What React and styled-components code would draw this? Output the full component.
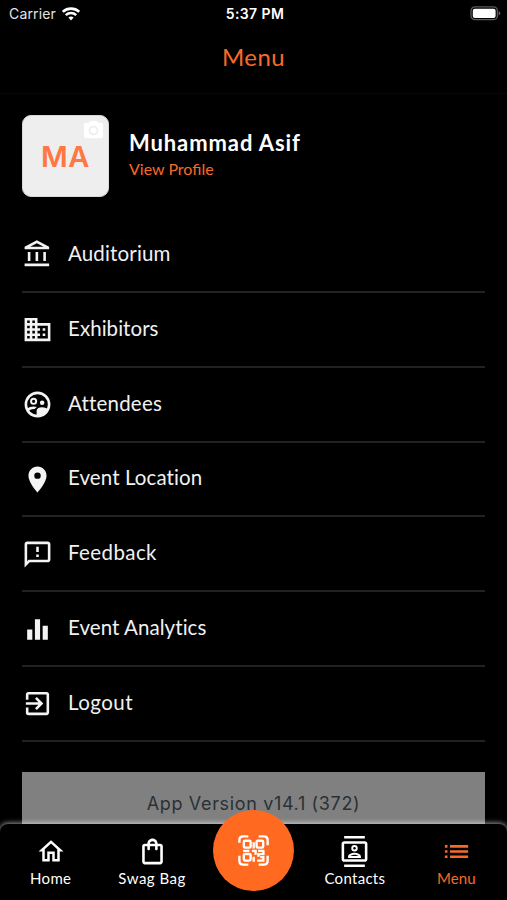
import React from "react";
import styled, { createGlobalStyle } from "styled-components";
import {
    MdOutlineAccountBalance,
    MdOutlineBusiness,
    MdPlace,
    MdOutlineFeedback,
    MdEqualizer,
    MdExitToApp,
    MdOutlineHome,
    MdOutlineShoppingBag,
    MdOutlineContacts,
    MdList,
    MdPhotoCamera,
} from "react-icons/md";

const menus = [
    { label: "Auditorium", icon: MdOutlineAccountBalance, spacing: 0.15 },
    { label: "Exhibitors", icon: MdOutlineBusiness, spacing: 0.05 },
    { label: "Attendees", icon: AttendeesIcon, spacing: 0.2 },
    { label: "Event Location", icon: MdPlace, spacing: 0.1 },
    { label: "Feedback", icon: MdOutlineFeedback, spacing: 0.4 },
    { label: "Event Analytics", icon: MdEqualizer, spacing: 0.06 },
    { label: "Logout", icon: MdExitToApp, spacing: 0.45 },
];

function AttendeesIcon() {
    return (
        <svg viewBox="0 0 24 24" fill="currentColor">
            <circle cx="12" cy="12" r="9" fill="none" stroke="currentColor" strokeWidth="2" />
            <circle cx="9" cy="9.5" r="2" fill="none" stroke="currentColor" strokeWidth="1.5" />
            <circle cx="15.6" cy="10.6" r="1.75" />
            <path d="M3.6 15.2Q6 13.6 9 13.6Q10.5 13.6 11.6 14Q10.3 14.7 9.8 15.5Q7.2 15.3 4.8 17Z" />
            <path d="M11.3 21V17.3Q11.3 14.2 15.6 14.2Q18.4 14.2 20 15.5Q18.2 20.8 11.3 21Z" />
        </svg>
    );
}

function WifiIcon() {
    return (
        <svg width="18" height="14" viewBox="0 0 18 14" fill="none" stroke="#fff">
            <path d="M.8 4.8C5.3.6 12.7.6 17.2 4.8" strokeWidth="2.6" />
            <path d="M3.8 8.1C6.6 5.3 11.4 5.3 14.2 8.1" strokeWidth="2.4" />
            <path d="M6.4 10.6Q9 8.3 11.6 10.6L9 13.4Z" fill="#fff" stroke="none" />
        </svg>
    );
}

function BatteryIcon() {
    return (
        <svg width="31" height="15" viewBox="0 0 31 15">
            <rect x="1" y="0.9" width="26.4" height="12.8" rx="4" fill="none" stroke="#5c5c5e" strokeWidth="1.3" />
            <rect x="2.8" y="2.7" width="22.8" height="9.2" rx="2" fill="#fff" />
            <path d="M28.7 5.2q1.6.6 1.6 2.1t-1.6 2.1Z" fill="#6a6a6c" />
        </svg>
    );
}

function QrIcon() {
    return (
        <svg width="33" height="33" viewBox="0 0 32 32" fill="none" stroke="#fff" strokeWidth="2.3">
            <path d="M2.3 8.5V6Q2.3 2.3 6 2.3H11M21 2.3H26Q29.7 2.3 29.7 6V11M29.7 21V26Q29.7 29.7 26 29.7H21M11 29.7H6Q2.3 29.7 2.3 26V21" />
            <rect x="6.6" y="6.6" width="6.6" height="6.6" rx="1.2" />
            <rect x="19" y="6.6" width="6.4" height="6.6" rx="1.2" />
            <rect x="6.6" y="19.4" width="6.6" height="6.4" rx="1.2" />
            <path d="M16.2 8V14M6 16.4H12M14.5 16.4H18V20M16.2 22V27M20.5 16.4H26.5M25.6 16V19.5H20.8V22M19.5 25.8H25.5V22.4H22.5" />
        </svg>
    );
}

function App() {
    return (
        <>
            <GlobalStyle />
            <Screen>
                <StatusBar>
                    <Carrier>
                        Carrier
                        <WifiIcon />
                    </Carrier>
                    <Time>5:37 PM</Time>
                    <Battery>
                        <BatteryIcon />
                    </Battery>
                </StatusBar>
                <Header>Menu</Header>
                <Content>
                    <Profile>
                        <Avatar>
                            MA
                            <Camera>
                                <MdPhotoCamera />
                            </Camera>
                        </Avatar>
                        <ProfileText>
                            <Name>Muhammad Asif</Name>
                            <ViewProfile>View Profile</ViewProfile>
                        </ProfileText>
                    </Profile>
                    <MenuList>
                        {menus.map(({ label, icon: Icon, spacing }) => (
                            <MenuItem key={label}>
                                <Icon />
                                <MenuLabel $spacing={spacing}>{label}</MenuLabel>
                            </MenuItem>
                        ))}
                    </MenuList>
                    <Version>App Version v14.1 (372)</Version>
                </Content>
                <TabBar>
                    <Tab>
                        <MdOutlineHome />
                        <TabLabel $spacing={0.3}>Home</TabLabel>
                    </Tab>
                    <Tab $size={31}>
                        <MdOutlineShoppingBag />
                        <TabLabel $spacing={0.5}>Swag Bag</TabLabel>
                    </Tab>
                    <ScanSlot>
                        <ScanBtn>
                            <QrIcon />
                        </ScanBtn>
                    </ScanSlot>
                    <Tab $size={31}>
                        <MdOutlineContacts />
                        <TabLabel $spacing={0.3}>Contacts</TabLabel>
                    </Tab>
                    <Tab $active $size={31}>
                        <MdList />
                        <TabLabel $spacing={0.1}>Menu</TabLabel>
                    </Tab>
                </TabBar>
            </Screen>
        </>
    );
}

const GlobalStyle = createGlobalStyle`
    * {
        box-sizing: border-box;
    }

    body {
        margin: 0;
        background: #000;
    }

    button {
        padding: 0;
        border: 0;
        background: none;
        font-family: inherit;
    }
`;

const Screen = styled.div`
    display: flex;
    flex-direction: column;
    width: 507px;
    height: 900px;
    overflow: hidden;
    background: #000;
    color: #fff;
    font-family: Lato, sans-serif;
`;

const StatusBar = styled.div`
    display: grid;
    flex-shrink: 0;
    grid-template-columns: 1fr auto 1fr;
    align-items: center;
    height: 27px;
    padding: 0 6px 0 9px;
    font-family: Inter, sans-serif;
    font-size: 14px;
`;

const Carrier = styled.div`
    display: flex;
    align-items: center;
    gap: 6px;
    color: #e4e4e4;
    letter-spacing: 0.15px;
`;

const Time = styled.div`
    font-weight: 600;
    font-size: 14px;
    letter-spacing: 0.4px;
`;

const Battery = styled.div`
    display: flex;
    justify-content: flex-end;
`;

const Header = styled.header`
    flex-shrink: 0;
    height: 67px;
    border-bottom: 1px solid #070707;
    color: #f86a27;
    font-size: 24px;
    line-height: 60px;
    letter-spacing: 0.4px;
    text-align: center;
`;

const Content = styled.main`
    display: flex;
    flex: 1;
    flex-direction: column;
    min-height: 0;
    padding: 21px 22px 0;
    overflow: hidden;
`;

const Profile = styled.section`
    display: flex;
    flex-shrink: 0;
    align-items: center;
    gap: 20px;
    height: 82px;
`;

const Avatar = styled.div`
    position: relative;
    display: flex;
    align-items: center;
    justify-content: center;
    width: 87px;
    height: 82px;
    border: 1px solid #d8d8d8;
    border-radius: 9px;
    background: #eeeeef;
    color: #ff7743;
    font-family: Inter, sans-serif;
    font-size: 29px;
    font-weight: 600;
    letter-spacing: 0.5px;
`;

const Camera = styled.span`
    position: absolute;
    top: 3px;
    right: 3px;
    display: flex;
    color: #fff;
    font-size: 23px;
`;

const ProfileText = styled.div`
    display: flex;
    flex-direction: column;
    align-items: flex-start;
    padding-bottom: 2px;
`;

const Name = styled.strong`
    font-size: 22px;
    font-weight: 700;
    line-height: 28px;
    letter-spacing: 0.9px;
`;

const ViewProfile = styled.button`
    color: #f86a27;
    font-size: 16px;
    line-height: 24px;
`;

const MenuList = styled.ul`
    flex-shrink: 0;
    margin: 21px 0 0;
    padding: 0;
    list-style: none;
`;

const MenuItem = styled.li`
    display: flex;
    align-items: center;
    gap: 15px;
    height: 74.85px;
    padding-top: 1px;
    border-bottom: 2px solid #222;

    svg {
        width: 31px;
        height: 31px;
        color: #f4f4f4;
    }
`;

const MenuLabel = styled.span`
    padding-bottom: 4px;
    color: #f1f1f1;
    font-size: 20.5px;
    line-height: 26px;
    letter-spacing: ${(props) => props.$spacing}px;
`;

const Version = styled.div`
    flex-shrink: 0;
    height: 62px;
    margin-top: 30px;
    background: #808080;
    color: #2b3036;
    font-family: Inter, sans-serif;
    font-size: 18px;
    line-height: 63px;
    letter-spacing: 0.65px;
    text-align: center;
`;

const TabBar = styled.nav`
    position: relative;
    display: grid;
    flex-shrink: 0;
    grid-template-columns: repeat(5, 1fr);
    height: 76px;
    border-radius: 8px 8px 0 0;
    background: #000;
    box-shadow: 0 -1px 5px rgba(255, 255, 255, 0.6);
`;

const Tab = styled.button`
    display: flex;
    flex-direction: column;
    align-items: center;
    padding-top: 12px;
    color: ${(props) => (props.$active ? "#f86a27" : "#fff")};

    svg {
        width: ${(props) => props.$size || 30}px;
        height: 31px;
    }
`;

const TabLabel = styled.span`
    font-size: 15px;
    line-height: 22px;
    letter-spacing: ${(props) => props.$spacing}px;
`;

const ScanSlot = styled.div`
    display: flex;
    justify-content: center;
`;

const ScanBtn = styled.button`
    display: flex;
    align-items: center;
    justify-content: center;
    flex-shrink: 0;
    width: 81px;
    height: 81px;
    margin-top: -14px;
    border-radius: 50%;
    background: #ff6a20;
`;

export default App;
